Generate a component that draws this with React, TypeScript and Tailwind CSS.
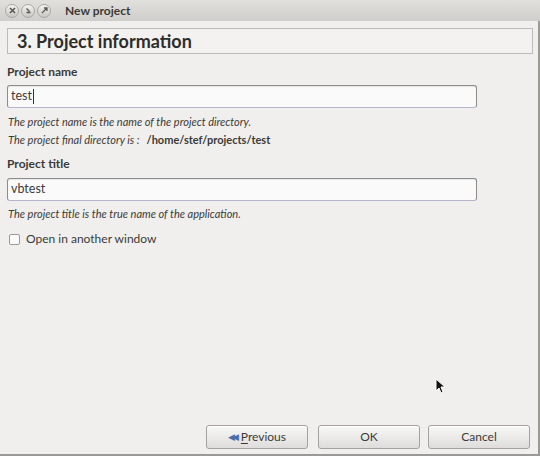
import { useState } from 'react'

const FONT = { fontFamily: 'Lato, "Open Sans", "DejaVu Sans", sans-serif' }

function TitleButton({ children }: { children: React.ReactNode }) {
  return (
    <span className="flex h-[14px] w-[14px] items-center justify-center rounded-full border border-[#a9a8a4] bg-gradient-to-b from-[#f4f3f1] to-[#c8c7c3] text-[#5a5955]">
      {children}
    </span>
  )
}

function Field({ value, caret }: { value: string; caret?: boolean }) {
  return (
    <div className="flex h-[23px] w-[470px] items-center rounded-[3px] border border-[#8c8c8c] border-b-[#b4b4cc] bg-[#fafafa] pl-[3px] text-[12.5px] text-[#3c3c3c] shadow-[inset_0_1px_1px_rgba(0,0,0,0.08)]">
      {value}
      {caret && <span className="ml-px h-[15px] w-px bg-[#333]" />}
    </div>
  )
}

function Button({ children, className }: { children: React.ReactNode; className?: string }) {
  return (
    <button className={`flex h-[24px] w-[102px] items-center justify-center rounded-[3px] border border-[#a3a29f] bg-gradient-to-b from-[#f8f8f7] to-[#dedddb] text-[12px] text-[#3c3b37] shadow-[inset_0_1px_0_#fff] ${className ?? ''}`}>
      {children}
    </button>
  )
}

export default function App() {
  const [other, setOther] = useState(false)
  return (
    <div style={FONT} className="relative flex h-[456px] w-[540px] flex-col overflow-hidden bg-[#f0efee] text-[#3c3b37]">
      {/* title bar */}
      <div className="flex h-[21px] shrink-0 items-center bg-gradient-to-b from-[#e1e0dd] to-[#cfcecb] pl-[5px]">
        <div className="flex gap-[2px]">
          <TitleButton>
            <svg width="7" height="7" viewBox="0 0 7 7"><path d="M1 1l5 5M6 1L1 6" stroke="currentColor" strokeWidth="1.6" /></svg>
          </TitleButton>
          <TitleButton>
            <svg width="7" height="7" viewBox="0 0 7 7"><path d="M1.5 1.5l3 3M1.5 5.5h4" stroke="currentColor" strokeWidth="1.4" /></svg>
          </TitleButton>
          <TitleButton>
            <svg width="7" height="7" viewBox="0 0 7 7"><path d="M1 6l5-5M3 1h3v3" stroke="currentColor" strokeWidth="1.3" fill="none" /></svg>
          </TitleButton>
        </div>
        <span className="ml-[14px] text-[12px] font-bold text-[#3c3b37]">New project</span>
      </div>

      <div className="flex flex-1 flex-col border-r-2 border-b-2 border-[#9a9996] px-[7px]">
        {/* page header */}
        <div className="mt-[7px] flex h-[26px] w-[526px] items-center border border-[#bcbbb8] bg-[#f3f2f1] pl-[9px] text-[18px] font-bold text-[#2e2d2a]">
          3. Project information
        </div>

        <div className="mt-[10px] text-[12px] leading-[16px] font-bold">Project name</div>
        <div className="mt-[5px]">
          <Field value="test" caret />
        </div>
        <div className="mt-[7px] pl-px text-[11px] leading-[14px] italic">The project name is the name of the project directory.</div>
        <div className="mt-[4px] flex items-baseline pl-px text-[11px] leading-[14px]">
          <span className="italic">The project final directory is :</span>
          <span className="ml-[7px] font-bold">/home/stef/projects/test</span>
        </div>

        <div className="mt-[9px] text-[12px] leading-[16px] font-bold">Project title</div>
        <div className="mt-[6px]">
          <Field value="vbtest" />
        </div>
        <div className="mt-[6px] pl-px text-[11px] leading-[14px] italic">The project title is the true name of the application.</div>

        <label className="mt-[10px] flex items-center gap-[6px] pl-[2px] text-[12px] leading-[16px]">
          <input
            type="checkbox"
            checked={other}
            onChange={(e) => setOther(e.target.checked)}
            className="h-[11px] w-[11px] appearance-none rounded-[2px] border border-[#9c9b98] bg-[#fafafa]"
          />
          Open in another window
        </label>

        <div className="flex-1" />

        <div className="mb-[5px] flex justify-end gap-[8px] pr-[1px]">
          <Button className="mr-[2px]">
            <span className="mr-[3px] text-[9px] tracking-[-3px] text-[#4a6ea9]">◀◀</span>
            <span className="ml-[2px]"><span className="underline underline-offset-2">P</span>revious</span>
          </Button>
          <Button>OK</Button>
          <Button>Cancel</Button>
        </div>
      </div>

      {/* mouse pointer */}
      <svg className="absolute left-[435px] top-[378px]" width="10" height="16" viewBox="0 0 10 16">
        <path d="M1 1v12l3-3 2 5 2-1-2-5h4z" fill="#111" stroke="#fff" strokeWidth="1" />
      </svg>
    </div>
  )
}
